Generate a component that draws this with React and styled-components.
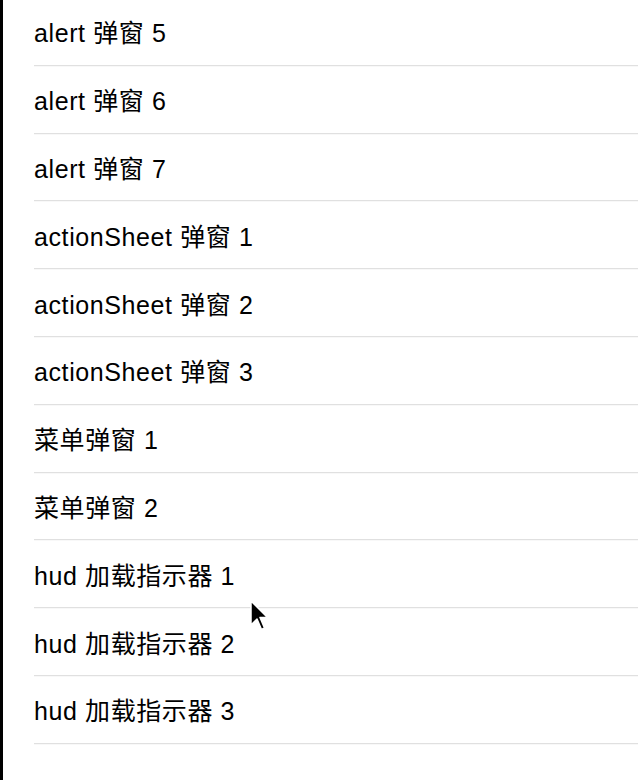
import React from 'react'
import styled, { createGlobalStyle } from 'styled-components'

const GlobalStyle = createGlobalStyle`
  html, body {
    margin: 0;
    padding: 0;
    background: #fff;
  }
`

const Page = styled.div`
  position: relative;
  height: 780px;
  overflow: hidden;
  border-left: 3px solid #000;
  background: #fff;
  font-family: "Liberation Sans", "Noto Sans CJK SC", sans-serif;
`

const List = styled.ul`
  list-style: none;
  margin: 0;
  padding: 0 0 0 31px;
  transform: translateY(-1.8px);
`

const Row = styled.li`
  height: 67.8px;
  box-sizing: border-box;
  display: flex;
  align-items: center;
  border-bottom: 1px solid #d9d9d9;
  font-size: 25px;
  letter-spacing: 0.6px;
  color: #000;
`

// mouse pointer lying over the list
const Cursor = styled.svg`
  position: absolute;
  left: 246px;
  top: 599px;
`

const items = [
  'alert 弹窗 5',
  'alert 弹窗 6',
  'alert 弹窗 7',
  'actionSheet 弹窗 1',
  'actionSheet 弹窗 2',
  'actionSheet 弹窗 3',
  '菜单弹窗 1',
  '菜单弹窗 2',
  'hud 加载指示器 1',
  'hud 加载指示器 2',
  'hud 加载指示器 3',
]

const App = () => {
  return (
    <Page>
      <GlobalStyle />
      <List>
        {items.map(item => (
          <Row key={item}>{item}</Row>
        ))}
      </List>
      <Cursor width="22" height="34" viewBox="0 0 22 34">
        <path
          d="M2 2 L2 26 L8 20 L12.5 30.5 L15.5 29 L11 18.5 L18.5 18.5 Z"
          fill="#000"
          stroke="#fff"
          strokeWidth="1.5"
          strokeLinejoin="round"
        />
      </Cursor>
    </Page>
  )
}

export default App
